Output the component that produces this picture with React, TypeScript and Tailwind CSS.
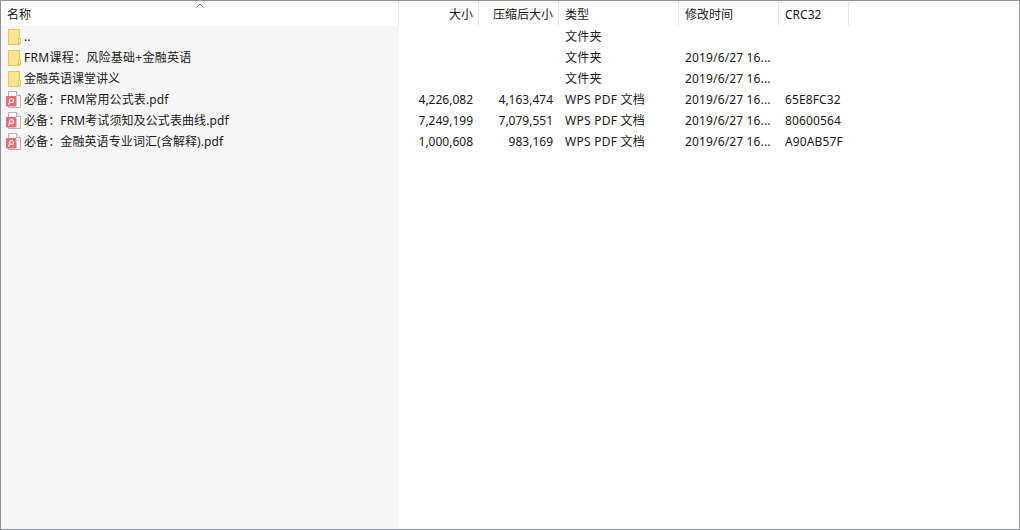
const font = "font-['Noto_Sans','Noto_Sans_CJK_SC',sans-serif]";

function FolderIcon() {
  return (
    <svg width="14" height="16" viewBox="0 0 14 16" className="shrink-0">
      <rect x="0.5" y="0.5" width="11" height="15" fill="#ffe38f" stroke="#efc94f" />
      <rect x="10.5" y="9.5" width="2" height="5" fill="#fff3c4" stroke="#efc94f" />
    </svg>
  );
}

function PdfIcon() {
  return (
    <svg width="16" height="18" viewBox="0 0 16 18" className="shrink-0">
      <path d="M2.5 0.5H10.5L14.5 4.5V16.5H2.5Z" fill="#fff" stroke="#b4b4b4" />
      <path d="M10.5 0.5V4.5H14.5" fill="#eee" stroke="#b4b4b4" />
      <rect x="0" y="5" width="10.5" height="10.5" rx="1" fill="#ee6b74" />
      <circle cx="5.5" cy="9.5" r="2" fill="none" stroke="#fff" strokeWidth="1.2" />
      <path d="M3.5 9.5C3.5 11.5 3.5 12.5 2.5 13.5" fill="none" stroke="#fff" strokeWidth="1.2" />
    </svg>
  );
}

const rows = [
  { icon: "folder", name: "..", track: "", size: "", packed: "", type: "文件夹", date: "", crc: "" },
  { icon: "folder", name: "FRM课程：风险基础+金融英语", track: "tracking-[0.27px]", size: "", packed: "", type: "文件夹", date: "2019/6/27 16...", crc: "" },
  { icon: "folder", name: "金融英语课堂讲义", track: "", size: "", packed: "", type: "文件夹", date: "2019/6/27 16...", crc: "" },
  { icon: "pdf", name: "必备：FRM常用公式表.pdf", track: "tracking-[0.12px]", size: "4,226,082", packed: "4,163,474", type: "WPS PDF 文档", date: "2019/6/27 16...", crc: "65E8FC32" },
  { icon: "pdf", name: "必备：FRM考试须知及公式表曲线.pdf", track: "tracking-[0.1px]", size: "7,249,199", packed: "7,079,551", type: "WPS PDF 文档", date: "2019/6/27 16...", crc: "80600564" },
  { icon: "pdf", name: "必备：金融英语专业词汇(含解释).pdf", track: "tracking-[0.1px]", size: "1,000,608", packed: "983,169", type: "WPS PDF 文档", date: "2019/6/27 16...", crc: "A90AB57F" },
];

function Header({ label, right }: { label: string; right?: boolean }) {
  return (
    <div className="h-[25px] pt-px bg-white">
      <div className={`h-[24px] flex items-center border-r border-[#e5e5e5] ${right ? "justify-end pr-[5px]" : "pl-[6px]"}`}>
        <span className="mt-[2px]">{label}</span>
      </div>
    </div>
  );
}

function Column({ width, label, right, values, track = "" }: { width: string; label: string; right?: boolean; values: string[]; track?: string }) {
  return (
    <div className={`${width} shrink-0`}>
      <Header label={label} right={right} />
      {values.map((v, i) => (
        <div key={i} className={`h-[21px] flex items-center whitespace-nowrap ${track} ${right ? "justify-end pr-[6px]" : "pl-[6px]"}`}>
          {v}
        </div>
      ))}
    </div>
  );
}

export default function App() {
  return (
    <div className={`w-[1020px] h-[530px] flex bg-white border border-[#8f939b] overflow-hidden text-[12px] text-[#1a1a1a] ${font}`}>
      <div className="w-[398px] shrink-0 h-full bg-[#f7f7f7] relative">
        <Header label="名称" />
        <svg width="8" height="5" viewBox="0 0 8 5" className="absolute left-[195px] top-[2px]">
          <path d="M0.5 4.5L4 1L7.5 4.5" fill="none" stroke="#8a8a8a" />
        </svg>
        {rows.map((r) => (
          <div key={r.name} className="h-[21px] flex items-center whitespace-nowrap">
            {r.icon === "folder" ? (
              <div className="ml-[7px] mr-[2px] flex"><FolderIcon /></div>
            ) : (
              <div className="ml-[5px] mr-[2px] flex"><PdfIcon /></div>
            )}
            <span className={r.track}>{r.name}</span>
          </div>
        ))}
      </div>
      <Column width="w-[80px]" label="大小" right values={rows.map((r) => r.size)} />
      <Column width="w-[80px]" label="压缩后大小" right values={rows.map((r) => r.packed)} />
      <Column width="w-[120px]" label="类型" track="tracking-[0.25px]" values={rows.map((r) => r.type)} />
      <Column width="w-[100px]" label="修改时间" track="tracking-[0.15px]" values={rows.map((r) => r.date)} />
      <Column width="w-[70px]" label="CRC32" track="tracking-[0.12px]" values={rows.map((r) => r.crc)} />
    </div>
  );
}
